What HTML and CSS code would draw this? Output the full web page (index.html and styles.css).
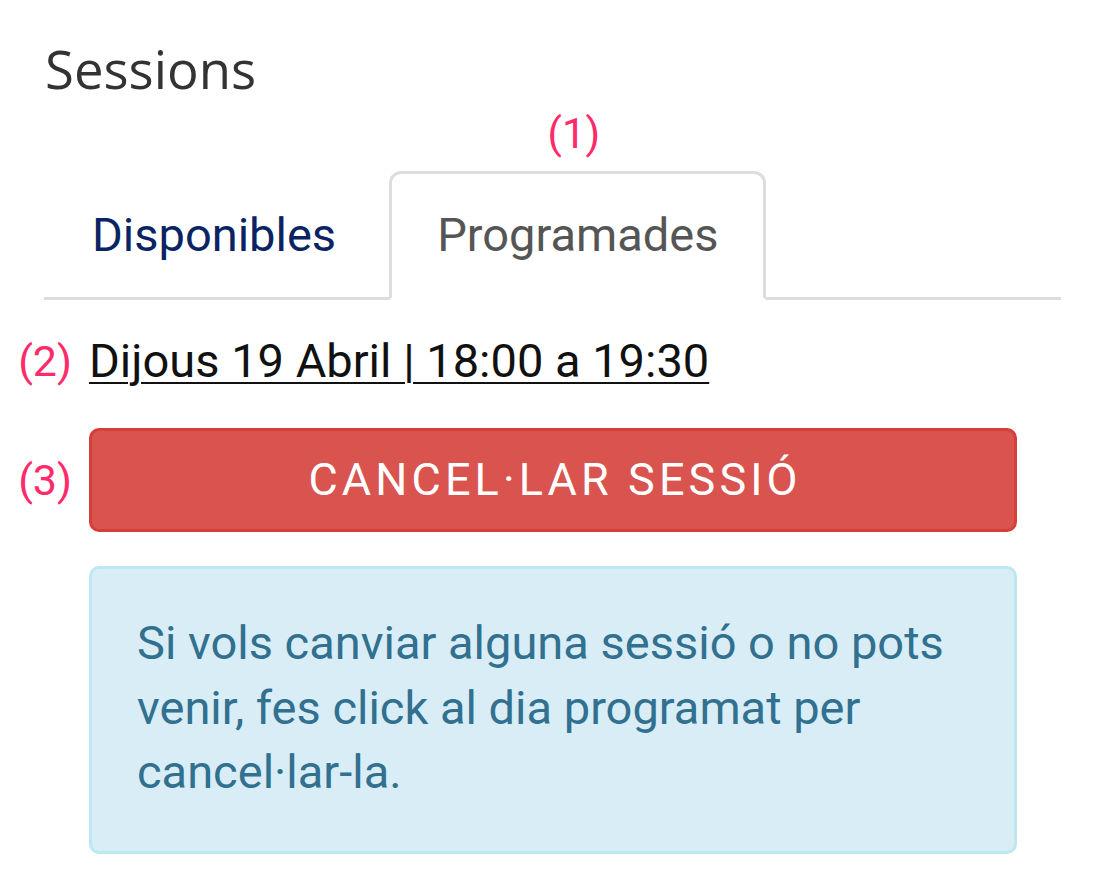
FILE: index.html
```html
<!DOCTYPE html>
<html lang="ca">
<head>
<meta charset="utf-8">
<title>Sessions</title>
<link rel="stylesheet" href="styles.css">
</head>
<body>
<div class="page">
  <h1 class="title">Sessions</h1>
  <ul class="tabs">
    <li class="tab"><a class="tab-link" href="#">Disponibles</a></li>
    <li class="tab active"><span class="note note-top">(1)</span><a class="tab-link" href="#">Programades</a></li>
  </ul>
  <div class="content">
    <div class="date-row">
      <span class="note note-left">(2)</span>
      <a class="date" href="#">Dijous 19 Abril | 18:00 a 19:30</a>
    </div>
    <div class="action">
      <span class="note note-left">(3)</span>
      <button class="btn-cancel" type="button">CANCEL·LAR SESSIÓ</button>
    </div>
    <div class="info">Si vols canviar alguna sessió o no pots venir, fes click al dia programat per cancel·lar-la.</div>
  </div>
</div>
</body>
</html>
```

FILE: styles.css
```css
html, body {
  margin: 0;
  padding: 0;
  background: #ffffff;
}

body {
  font-family: Roboto, "Liberation Sans", sans-serif;
  color: #333333;
}

.page {
  width: 1017px;
  padding: 39px 0 0 44px;
}

.title {
  margin: 0 0 0 1px;
  font-family: "Open Sans", "DejaVu Sans", sans-serif;
  font-weight: 400;
  font-size: 52.7px;
  line-height: 59px;
  color: #333333;
}

.tabs {
  list-style: none;
  margin: 73px 0 0;
  padding: 0;
  display: flex;
  border-bottom: 3px solid #dddddd;
}

.tab {
  position: relative;
  margin-bottom: -3px;
  margin-right: 5px;
}

.tab-link {
  display: block;
  padding: 27px 45px 28px;
  font-size: 47px;
  line-height: 68px;
  text-decoration: none;
  color: #0a2463;
  border: 3px solid transparent;
  border-radius: 12px 12px 0 0;
}

.tab.active .tab-link {
  color: #555555;
  background: #ffffff;
  border-color: #dddddd #dddddd transparent;
}

.note {
  position: absolute;
  font-size: 42px;
  line-height: 1;
  color: #ff2a6b;
  white-space: nowrap;
}

.note-top {
  left: 0;
  right: 0;
  text-align: center;
  margin-left: -8px;
  bottom: calc(100% + 16px);
}

.note-left {
  right: 100%;
  margin-right: 17px;
  top: 50%;
  transform: translateY(-50%);
  font-size: 43px;
}

.content {
  margin: 0 44px 0 45px;
}

.date-row {
  position: relative;
  margin-top: 27px;
  font-size: 47px;
  line-height: 67px;
}

.date {
  color: #111111;
  text-decoration: underline;
  text-decoration-thickness: 2px;
  text-underline-offset: 5px;
}

.action {
  position: relative;
  margin-top: 34px;
}

.btn-cancel {
  display: block;
  width: 100%;
  margin: 0;
  padding: 17px 0;
  font-family: Roboto, "Liberation Sans", sans-serif;
  font-size: 45px;
  line-height: 64px;
  letter-spacing: 4.1px;
  text-indent: 4.1px;
  color: #ffffff;
  background: #d9534f;
  border: 3px solid #d43f3a;
  border-radius: 10px;
}

.info {
  margin-top: 34px;
  padding: 42px 45px 46px;
  font-size: 47px;
  line-height: 64.5px;
  color: #31708f;
  background: #d9edf7;
  border: 3px solid #bce8f1;
  border-radius: 10px;
}
```
